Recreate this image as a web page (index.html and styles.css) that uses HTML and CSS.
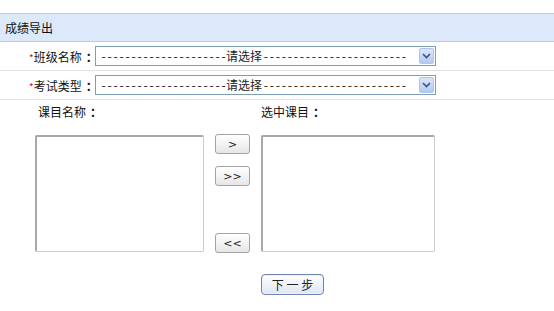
FILE: index.html
```html
<!doctype html>
<html lang="zh-CN">
<head>
  <meta charset="utf-8">
  <title>成绩导出</title>
  <link rel="stylesheet" href="styles.css">
</head>
<body>
  <div class="title">成绩导出</div>
  <div class="form-row">
    <label class="field-label"><span class="req">*</span>班级名称<span class="colon">：</span></label>
    <div class="fake-select">
      <span class="select-text"><span class="dash">---------------------</span>请选择<span class="dash">------------------------</span></span>
      <span class="select-arrow"><svg width="9" height="6" viewBox="0 0 9 6"><path d="M1 1 L4.5 4.5 L8 1" fill="none" stroke="#3b5584" stroke-width="1.6"/></svg></span>
    </div>
  </div>
  <div class="form-row">
    <label class="field-label"><span class="req">*</span>考试类型<span class="colon">：</span></label>
    <div class="fake-select">
      <span class="select-text"><span class="dash">---------------------</span>请选择<span class="dash">------------------------</span></span>
      <span class="select-arrow"><svg width="9" height="6" viewBox="0 0 9 6"><path d="M1 1 L4.5 4.5 L8 1" fill="none" stroke="#3b5584" stroke-width="1.6"/></svg></span>
    </div>
  </div>
  <div class="picker">
    <div class="list-label">课目名称<span class="colon">：</span></div>
    <div></div>
    <div class="list-label right">选中课目<span class="colon">：</span></div>
    <select class="listbox" multiple></select>
    <div class="move-buttons">
      <button type="button" class="move-btn">&gt;</button>
      <button type="button" class="move-btn">&gt;&gt;</button>
      <button type="button" class="move-btn last">&lt;&lt;</button>
    </div>
    <select class="listbox wide" multiple></select>
    <div class="next-cell">
      <button type="button" class="next-btn">下 一 步</button>
    </div>
  </div>
</body>
</html>
```

FILE: styles.css
```css
body {
  margin: 0;
  padding-top: 13px;
  font-family: "Noto Sans CJK SC", "Liberation Sans", sans-serif;
  font-size: 12px;
  color: #111;
  background: #fff;
}
.colon {
  display: inline-block;
  width: 12px;
  padding-left: 4px;
  box-sizing: border-box;
  font-weight: bold;
}
.title {
  height: 27px;
  line-height: 27px;
  padding-left: 5px;
  background: #dce9fb;
  border-top: 1px solid #b7cce6;
  border-bottom: 1px solid #b7cce6;
}
.form-row {
  display: flex;
  align-items: center;
  height: 28px;
  border-bottom: 1px solid #e2e2e2;
}
.field-label {
  width: 66px;
  padding-left: 29px;
  white-space: nowrap;
}
.req {
  color: #e0001a;
  font-size: 10px;
}
.fake-select {
  display: flex;
  align-items: center;
  width: 338px;
  height: 18px;
  border: 1px solid #7f9db9;
  background: #fff;
  padding-right: 1px;
}
.select-text {
  flex: 1;
  padding-left: 4px;
  white-space: nowrap;
  overflow: hidden;
  line-height: 18px;
  color: #222;
}
.dash {
  font-family: "DejaVu Sans Mono", monospace;
  font-size: 12px;
  letter-spacing: -1.22px;
  color: #333;
}
.select-arrow {
  display: flex;
  align-items: center;
  justify-content: center;
  width: 15px;
  height: 16px;
  background: linear-gradient(#dbe6fb, #b4c9f1);
  border: 1px solid #b3c4e6;
  box-sizing: border-box;
  border-radius: 2px;
}
.picker {
  display: grid;
  grid-template-columns: 169px 35px 174px;
  grid-template-rows: 35px 117px auto;
  column-gap: 11px;
  padding-left: 35px;
}
.list-label {
  padding: 5px 0 0 3px;
  line-height: 14px;
}
.list-label.right {
  padding-left: 0;
}
.listbox {
  width: 100%;
  height: 117px;
  box-sizing: border-box;
  margin: 0;
  background: #fff;
  border-style: solid;
  border-width: 2px 1px 1px 2px;
  border-color: #a5a9ad #c9ccd0 #c9ccd0 #a5a9ad;
  outline: none;
}
.move-buttons {
  display: flex;
  flex-direction: column;
  gap: 12px;
  margin-top: -1px;
}
.move-btn {
  width: 35px;
  height: 20px;
  padding: 0;
  font-family: "DejaVu Sans", sans-serif;
  font-size: 11px;
  color: #222;
  background: linear-gradient(#ffffff, #e6e6e6);
  border: 1px solid #a3a3a3;
  border-radius: 3px;
}
.move-btn.last {
  margin-top: auto;
  margin-bottom: -1px;
}
.next-cell {
  grid-column: 3;
  padding-top: 22px;
}
.next-btn {
  width: 63px;
  height: 21px;
  padding: 0;
  font-family: "Noto Sans CJK SC", sans-serif;
  font-size: 12px;
  color: #222;
  background: linear-gradient(#ffffff, #dfe5f2);
  border: 1px solid #6f82b4;
  border-radius: 4px;
  box-shadow: inset 0 0 0 1px #eef2fb;
}
```
